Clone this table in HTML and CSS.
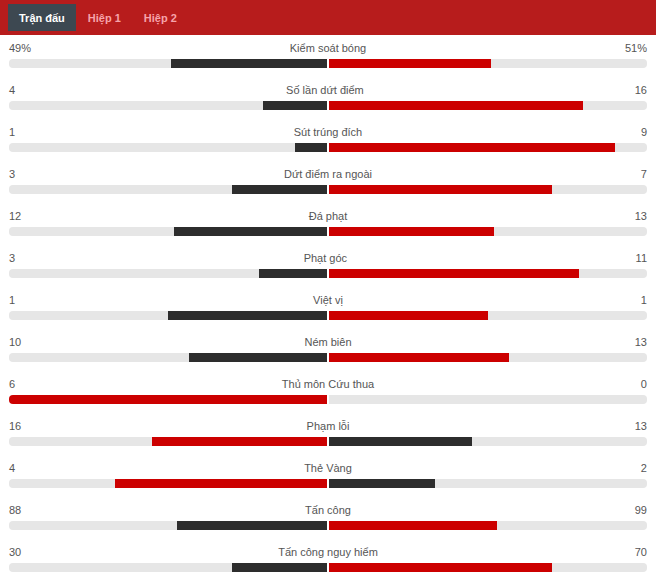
FILE: index.html
```html
<!DOCTYPE html>
<html lang="vi">
<head>
<meta charset="utf-8">
<title>Thống kê trận đấu</title>
<link rel="stylesheet" href="styles.css">
</head>
<body>
<div class="tabs">
  <div class="tab active">Trận đấu</div>
  <div class="tab">Hiệp 1</div>
  <div class="tab">Hiệp 2</div>
</div>
<div class="stats">
  <div class="row">
    <div class="labels"><span>49%</span><span>Kiểm soát bóng</span><span>51%</span></div>
    <div class="bars"><div class="half left"><div class="fill dark" style="width:49%"></div></div><div class="half right"><div class="fill red" style="width:51%"></div></div></div>
  </div>
  <div class="row">
    <div class="labels"><span>4</span><span>Số lần dứt điểm</span><span>16</span></div>
    <div class="bars"><div class="half left"><div class="fill dark" style="width:20%"></div></div><div class="half right"><div class="fill red" style="width:80%"></div></div></div>
  </div>
  <div class="row">
    <div class="labels"><span>1</span><span>Sút trúng đích</span><span>9</span></div>
    <div class="bars"><div class="half left"><div class="fill dark" style="width:10%"></div></div><div class="half right"><div class="fill red" style="width:90%"></div></div></div>
  </div>
  <div class="row">
    <div class="labels"><span>3</span><span>Dứt điểm ra ngoài</span><span>7</span></div>
    <div class="bars"><div class="half left"><div class="fill dark" style="width:30%"></div></div><div class="half right"><div class="fill red" style="width:70%"></div></div></div>
  </div>
  <div class="row">
    <div class="labels"><span>12</span><span>Đá phạt</span><span>13</span></div>
    <div class="bars"><div class="half left"><div class="fill dark" style="width:48%"></div></div><div class="half right"><div class="fill red" style="width:52%"></div></div></div>
  </div>
  <div class="row">
    <div class="labels"><span>3</span><span>Phạt góc</span><span>11</span></div>
    <div class="bars"><div class="half left"><div class="fill dark" style="width:21.43%"></div></div><div class="half right"><div class="fill red" style="width:78.57%"></div></div></div>
  </div>
  <div class="row">
    <div class="labels"><span>1</span><span>Việt vị</span><span>1</span></div>
    <div class="bars"><div class="half left"><div class="fill dark" style="width:50%"></div></div><div class="half right"><div class="fill red" style="width:50%"></div></div></div>
  </div>
  <div class="row">
    <div class="labels"><span>10</span><span>Ném biên</span><span>13</span></div>
    <div class="bars"><div class="half left"><div class="fill dark" style="width:43.48%"></div></div><div class="half right"><div class="fill red" style="width:56.52%"></div></div></div>
  </div>
  <div class="row">
    <div class="labels"><span>6</span><span>Thủ môn Cứu thua</span><span>0</span></div>
    <div class="bars"><div class="half left"><div class="fill red" style="width:100%"></div></div><div class="half right"><div class="fill dark" style="width:0%"></div></div></div>
  </div>
  <div class="row">
    <div class="labels"><span>16</span><span>Phạm lỗi</span><span>13</span></div>
    <div class="bars"><div class="half left"><div class="fill red" style="width:55.17%"></div></div><div class="half right"><div class="fill dark" style="width:44.83%"></div></div></div>
  </div>
  <div class="row">
    <div class="labels"><span>4</span><span>Thẻ Vàng</span><span>2</span></div>
    <div class="bars"><div class="half left"><div class="fill red" style="width:66.67%"></div></div><div class="half right"><div class="fill dark" style="width:33.33%"></div></div></div>
  </div>
  <div class="row">
    <div class="labels"><span>88</span><span>Tấn công</span><span>99</span></div>
    <div class="bars"><div class="half left"><div class="fill dark" style="width:47.06%"></div></div><div class="half right"><div class="fill red" style="width:52.94%"></div></div></div>
  </div>
  <div class="row">
    <div class="labels"><span>30</span><span>Tấn công nguy hiểm</span><span>70</span></div>
    <div class="bars"><div class="half left"><div class="fill dark" style="width:30%"></div></div><div class="half right"><div class="fill red" style="width:70%"></div></div></div>
  </div>
</div>
</body>
</html>
```
FILE: styles.css
```css
html, body {
  margin: 0;
  padding: 0;
  background: #ffffff;
  font-family: "Liberation Sans", Arial, sans-serif;
}

.tabs {
  display: flex;
  gap: 1px;
  height: 27px;
  padding: 4px 8px;
  background: #b71c1c;
}

.tab {
  display: flex;
  align-items: center;
  padding: 1px 11px 0;
  font-size: 11px;
  font-weight: bold;
  color: #f6a3aa;
}

.tab.active {
  background: #3d4851;
  color: #ffffff;
}

.stats {
  padding: 0 9px;
}

.row {
  padding: 6px 0 9px;
}

.labels {
  display: flex;
  justify-content: space-between;
  height: 14px;
  line-height: 14px;
  font-size: 11px;
  color: #555555;
  margin-bottom: 4px;
}

.bars {
  display: flex;
  gap: 2px;
  height: 9px;
}

.half {
  flex: 1;
  display: flex;
  background: #e6e6e6;
  overflow: hidden;
}

.half.left {
  justify-content: flex-end;
  border-radius: 4px 0 0 4px;
}

.half.right {
  justify-content: flex-start;
  border-radius: 0 4px 4px 0;
}

.fill {
  height: 100%;
}

.fill.dark {
  background: #2d2d2d;
}

.fill.red {
  background: #cc0000;
}
```
